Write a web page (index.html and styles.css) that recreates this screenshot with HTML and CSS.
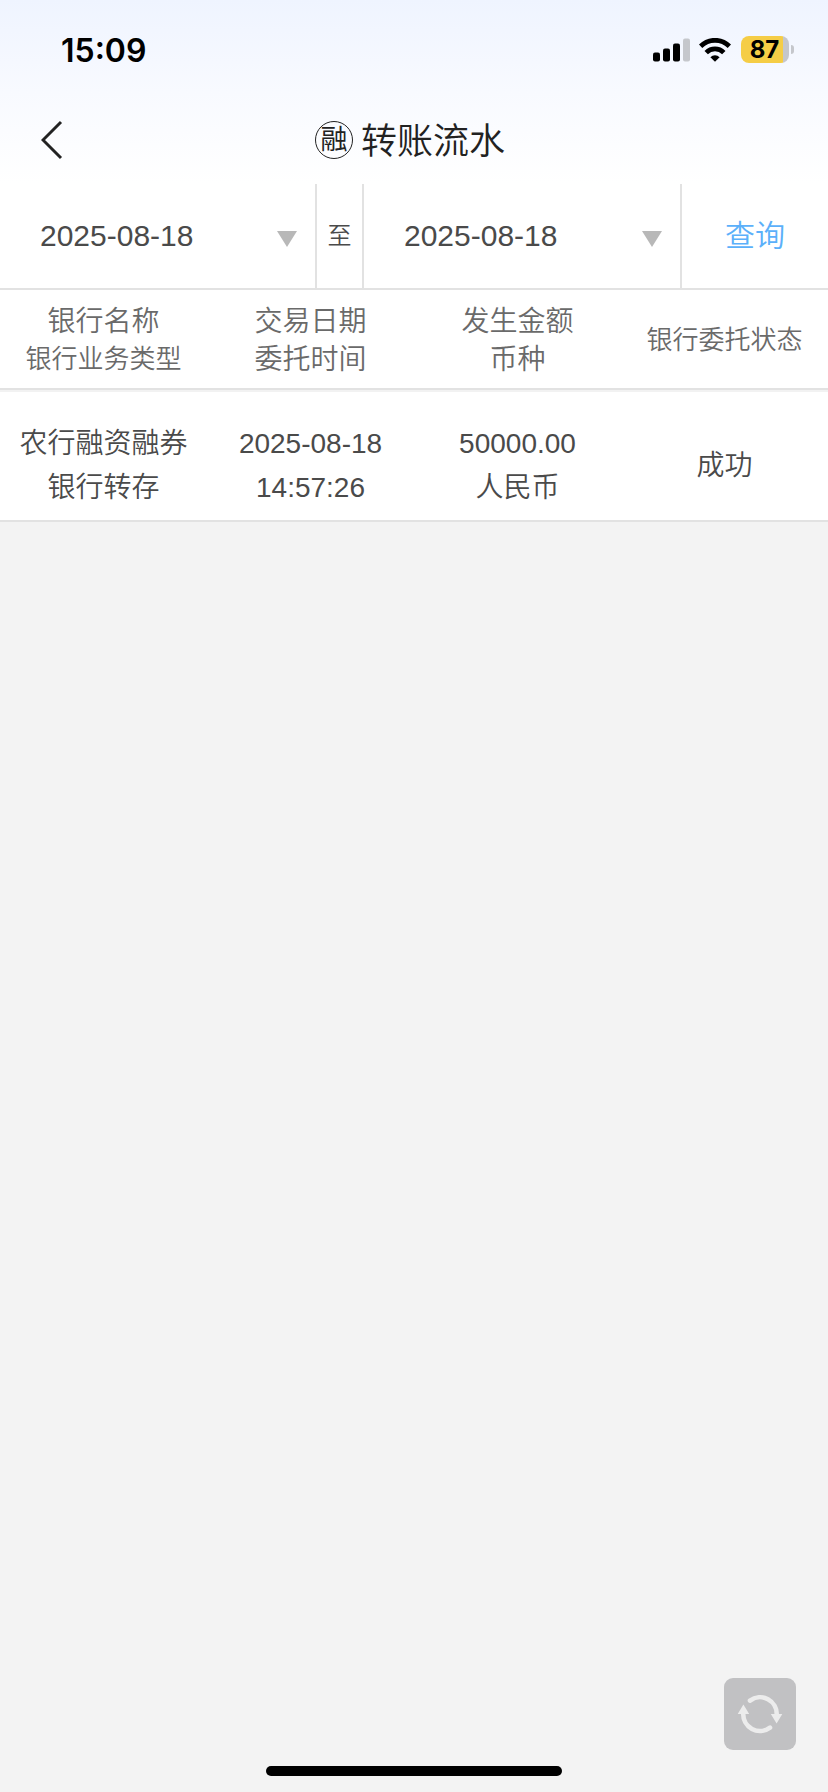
FILE: index.html
```html
<!DOCTYPE html>
<html lang="zh-CN">
<head>
  <meta charset="UTF-8">
  <meta name="viewport" content="width=device-width, initial-scale=1.0">
  <title>转账流水</title>
  <link rel="stylesheet" href="styles.css">
</head>
<body>
  <div class="top">
    <div class="status-bar">
      <span class="clock">15:09</span>
      <div class="status-icons">
        <svg class="signal" width="37" height="24" viewBox="0 0 37 24">
          <rect x="0" y="14.5" width="7" height="9" rx="2"/>
          <rect x="10" y="10.5" width="7" height="13" rx="2"/>
          <rect x="20" y="5.5" width="7" height="18" rx="2"/>
          <rect x="30" y="0.5" width="7" height="23" rx="2" fill="#c5c7cc"/>
        </svg>
        <svg class="wifi" width="32" height="24" viewBox="0 0 32 24">
          <g fill="none" stroke="#000" stroke-width="4.8">
            <path d="M1.6 8.2 A20.5 20.5 0 0 1 30.4 8.2"/>
            <path d="M7.2 14.6 A12.4 12.4 0 0 1 24.8 14.6"/>
          </g>
          <path d="M16 23.8 L11.4 19.2 A6.6 6.6 0 0 1 20.6 19.2 Z"/>
        </svg>
        <div class="battery"><span>87</span></div>
        <div class="battery-cap"></div>
      </div>
    </div>

    <div class="nav-bar">
      <a class="back">
        <svg width="22" height="40" viewBox="0 0 22 40">
          <path d="M20 2 L2 20 L20 38" fill="none" stroke="#222" stroke-width="3"/>
        </svg>
      </a>
      <h1 class="title"><span class="badge">融</span>转账流水</h1>
    </div>
  </div>

  <div class="filter">
    <div class="date">2025-08-18<i class="arrow"></i></div>
    <div class="to">至</div>
    <div class="date date-end">2025-08-18<i class="arrow"></i></div>
    <div class="query">查询</div>
  </div>

  <div class="list-head">
    <div class="cell"><p>银行名称</p><p class="small">银行业务类型</p></div>
    <div class="cell"><p>交易日期</p><p>委托时间</p></div>
    <div class="cell"><p>发生金额</p><p>币种</p></div>
    <div class="cell"><p class="small">银行委托状态</p></div>
  </div>

  <div class="list-row">
    <div class="cell"><p>农行融资融券</p><p>银行转存</p></div>
    <div class="cell"><p>2025-08-18</p><p>14:57:26</p></div>
    <div class="cell"><p>50000.00</p><p>人民币</p></div>
    <div class="cell"><p>成功</p></div>
  </div>

  <div class="refresh">
    <svg width="72" height="72" viewBox="0 0 72 72">
      <g fill="none" stroke="#ececec" stroke-width="4.6" stroke-linecap="round">
        <path d="M26 22.6 A16.7 16.7 0 0 1 52.7 37"/>
        <path d="M46 49.6 A16.7 16.7 0 0 1 19.3 35"/>
      </g>
      <path d="M46.8 36 H58.3 L52.6 45.6 Z M13.7 36 H25.2 L19.4 26.6 Z" fill="#ececec"/>
    </svg>
  </div>
  <div class="home-bar"></div>
</body>
</html>
```

FILE: styles.css
```css
* {
  box-sizing: border-box;
}

body {
  margin: 0;
  height: 1792px;
  overflow: hidden;
  background: #f3f3f3;
  font-family: "Liberation Sans", "Noto Sans CJK SC", sans-serif;
  font-weight: 350;
  color: #4a4a4a;
}

p {
  margin: 0;
}

.top {
  height: 184px;
  background: linear-gradient(#eff4ff, #f8faff 50%, #fff);
}

/* status bar */
.status-bar {
  display: flex;
  justify-content: space-between;
  height: 96px;
  padding: 30px 34px 0 61px;
}

.clock {
  font: 600 32px/41px Inter, sans-serif;
  color: #000;
}

.status-icons {
  display: flex;
  align-items: center;
  height: 39px;
}

.wifi {
  margin: 0 10px 0 9px;
}

.battery {
  width: 48px;
  height: 27px;
  border-radius: 8px;
  background: linear-gradient(90deg, #f5cd46 42px, #c5c7cc 42px);
  font: 700 24px/27px Inter, sans-serif;
  color: #000;
  text-align: center;
  padding-right: 1px;
}

.battery-cap {
  width: 3px;
  height: 9px;
  margin-left: 2px;
  border-radius: 0 4px 4px 0;
  background: #c5c7cc;
}

/* nav */
.nav-bar {
  display: grid;
  grid-template-columns: 100px 1fr 100px;
  align-items: center;
  height: 88px;
}

.back {
  display: flex;
  padding-left: 41px;
}

.title {
  display: flex;
  justify-content: center;
  align-items: center;
  margin: 0;
  padding: 4px 8px 0 0;
  font-size: 36px;
  line-height: 52px;
  font-weight: 350;
  color: #222;
}

.badge {
  width: 38px;
  height: 38px;
  margin: -4px 8px 0 0;
  border: 1.5px solid #222;
  border-radius: 50%;
  font-size: 27px;
  font-weight: 400;
  line-height: 37px;
  text-align: center;
}

/* date filter */
.filter {
  display: flex;
  height: 106px;
  border-bottom: 2px solid #e2e2e2;
  background: #fff;
  line-height: 104px;
  font-size: 30px;
}

.date {
  display: flex;
  justify-content: space-between;
  align-items: center;
  width: 317px;
  padding: 0 18px 0 40px;
  border-right: 2px solid #e2e2e2;
}

.date-end {
  width: 318px;
}

.arrow {
  margin-top: 5px;
  border: 10px solid transparent;
  border-top: 16px solid #b8b8b8;
  border-bottom: 0;
}

.to {
  width: 47px;
  border-right: 2px solid #e2e2e2;
  font-size: 24px;
  text-align: center;
}

.query {
  flex: 1;
  color: #5bb0fa;
  text-align: center;
}

/* list */
.list-head,
.list-row {
  display: flex;
  align-items: center;
  background: #fff;
  font-size: 28px;
  text-align: center;
}

.list-head {
  height: 100px;
  padding-top: 4px;
  border-bottom: 2px solid #e2e2e2;
  line-height: 38px;
  color: #6a6a6a;
}

.list-row {
  height: 132px;
  padding-top: 19px;
  border-top: 2px solid #f2f2f2;
  border-bottom: 2px solid #e2e2e2;
  line-height: 44px;
}

.cell {
  flex: 1;
}

.small {
  margin: -1px 0 1px;
  font-size: 26px;
}

/* floating button */
.refresh {
  position: absolute;
  left: 724px;
  top: 1678px;
  width: 72px;
  height: 72px;
  border-radius: 9px;
  background: #c1c1c3;
}

.home-bar {
  position: absolute;
  left: 266px;
  top: 1766px;
  width: 296px;
  height: 10px;
  border-radius: 5px;
  background: #000;
}
```
